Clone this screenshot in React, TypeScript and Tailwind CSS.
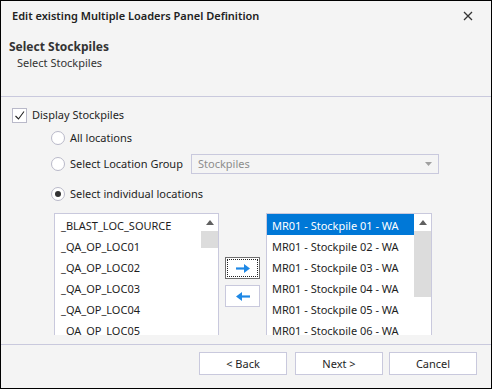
import React from 'react';

const leftItems = [
  '_BLAST_LOC_SOURCE',
  '_QA_OP_LOC01',
  '_QA_OP_LOC02',
  '_QA_OP_LOC03',
  '_QA_OP_LOC04',
  '_QA_OP_LOC05',
  '_QA_OP_LOC06',
];

const rightItems = [
  'MR01 - Stockpile 01 - WA',
  'MR01 - Stockpile 02 - WA',
  'MR01 - Stockpile 03 - WA',
  'MR01 - Stockpile 04 - WA',
  'MR01 - Stockpile 05 - WA',
  'MR01 - Stockpile 06 - WA',
  'MR01 - Stockpile 07 - WA',
];

function Radio({ checked }: { checked?: boolean }) {
  return (
    <span className="w-[14px] h-[14px] rounded-full border border-[#b9b9c9] bg-white flex items-center justify-center shrink-0">
      {checked && <span className="w-[6px] h-[6px] rounded-full bg-[#333]" />}
    </span>
  );
}

function ListBox({
  items,
  selected,
  thumbH,
  width,
  textPad,
}: {
  items: string[];
  selected?: number;
  thumbH: number;
  width: string;
  textPad: string;
}) {
  return (
    <div className={`${width} h-[160px] border border-[#c9c9dd] bg-white flex shrink-0`}>
      <div className="flex-1 flex flex-col overflow-hidden">
        {items.map((it, i) => (
          <div
            key={i}
            className={`h-[21px] shrink-0 flex items-center pt-[2px] whitespace-nowrap ${textPad} ${
              i === selected ? 'bg-[#0078d7] text-white' : 'text-[#1e1e1e]'
            }`}
          >
            {it}
          </div>
        ))}
      </div>
      <div className="w-[17px] flex flex-col bg-white">
        <div className="h-[17px] flex items-center justify-center">
          <svg width="8" height="5" viewBox="0 0 8 5">
            <path d="M0 5 L4 0 L8 5 Z" fill="#606060" />
          </svg>
        </div>
        <div className="bg-[#dcdcdc]" style={{ height: thumbH }} />
        <div className="flex-1" />
        <div className="h-[17px] flex items-center justify-center">
          <svg width="8" height="5" viewBox="0 0 8 5">
            <path d="M0 0 L4 5 L8 0 Z" fill="#606060" />
          </svg>
        </div>
      </div>
    </div>
  );
}

function Button({ children }: { children: React.ReactNode }) {
  return (
    <div className="w-[88px] h-[23px] border border-[#c9c9dd] bg-white flex items-center justify-center text-[#1e1e1e]">
      {children}
    </div>
  );
}

export default function App() {
  return (
    <div className="w-[492px] h-[389px] border border-black bg-[#f4f4f4] flex flex-col font-['Noto_Sans',sans-serif] text-[11px] leading-[16px] text-[#1e1e1e] overflow-hidden">
      <div className="h-[30px] shrink-0 flex items-center justify-between pl-[11px] pr-[18px]">
        <span className="font-semibold text-[#222]">Edit existing Multiple Loaders Panel Definition</span>
        <svg width="10" height="10" viewBox="0 0 10 10">
          <path d="M1 1 L9 9 M9 1 L1 9" stroke="#333" strokeWidth="1.3" />
        </svg>
      </div>

      <div className="h-[66px] shrink-0 pt-[8px] pl-[8px] border-b border-[#c9c9dd]">
        <div className="font-bold text-[12px] text-[#333] leading-[16px]">Select Stockpiles</div>
        <div className="pl-[8px] leading-[15px] text-[#333]">Select Stockpiles</div>
      </div>

      <div className="h-[238px] shrink-0 overflow-hidden pt-[10px] pl-[11px]">
        <div className="h-[16px] flex items-center gap-[5px]">
          <span className="w-[15px] h-[15px] border border-[#b9b9c9] bg-white flex items-center justify-center">
            <svg width="11" height="11" viewBox="0 0 11 11">
              <path d="M1.5 6 L4.5 9 L10 1.5" fill="none" stroke="#222" strokeWidth="1.1" />
            </svg>
          </span>
          <span>Display Stockpiles</span>
        </div>

        <div className="pl-[39px]">
          <div className="mt-[7px] h-[16px] flex items-center gap-[5px]">
            <Radio />
            <span>All locations</span>
          </div>
          <div className="mt-[8px] h-[20px] flex items-center">
            <Radio />
            <span className="w-[126px] pl-[5px] shrink-0 whitespace-nowrap">Select Location Group</span>
            <div className="w-[248px] h-[20px] border border-[#c9c9dd] flex items-center justify-between pl-[6px] pr-[6px] text-[#8c8c8c]">
              <span>Stockpiles</span>
              <svg width="7" height="4" viewBox="0 0 7 4">
                <path d="M0 0 L7 0 L3.5 4 Z" fill="#a0a0a0" />
              </svg>
            </div>
          </div>
          <div className="mt-[12px] h-[16px] flex items-center gap-[5px]">
            <Radio checked />
            <span>Select individual locations</span>
          </div>
        </div>

        <div className="mt-[11px] ml-[42px] flex items-start">
          <ListBox items={leftItems} thumbH={17} width="w-[165px]" textPad="pl-[6px]" />
          <div className="ml-[6px] mt-[44px] flex flex-col gap-[6px]">
            <div className="w-[35px] h-[22px] border border-[#6e6e6e] bg-white p-[1px]">
              <div className="w-full h-full border border-dotted border-[#222] flex items-center justify-center">
                <svg width="14" height="9" viewBox="0 0 14 9">
                  <path d="M0 4.5 H9" stroke="#1e88e5" strokeWidth="2.2" />
                  <path d="M8 0 L14 4.5 L8 9 Z" fill="#1e88e5" />
                </svg>
              </div>
            </div>
            <div className="w-[35px] h-[22px] border border-[#c9c9dd] bg-white flex items-center justify-center">
              <svg width="14" height="9" viewBox="0 0 14 9">
                <path d="M5 4.5 H14" stroke="#1e88e5" strokeWidth="2.2" />
                <path d="M6 0 L0 4.5 L6 9 Z" fill="#1e88e5" />
              </svg>
            </div>
          </div>
          <div className="ml-[6px]">
            <ListBox items={rightItems} selected={0} thumbH={66} width="w-[166px]" textPad="pl-[5px]" />
          </div>
        </div>
      </div>

      <div className="h-[9px] shrink-0" />

      <div className="flex-1 border-t border-[#c9c9dd] flex justify-end items-start pt-[7px] pr-[14px]">
        <Button>&lt; Back</Button>
        <div className="ml-[8px]">
          <Button>Next &gt;</Button>
        </div>
        <div className="ml-[6px]">
          <Button>Cancel</Button>
        </div>
      </div>
    </div>
  );
}
